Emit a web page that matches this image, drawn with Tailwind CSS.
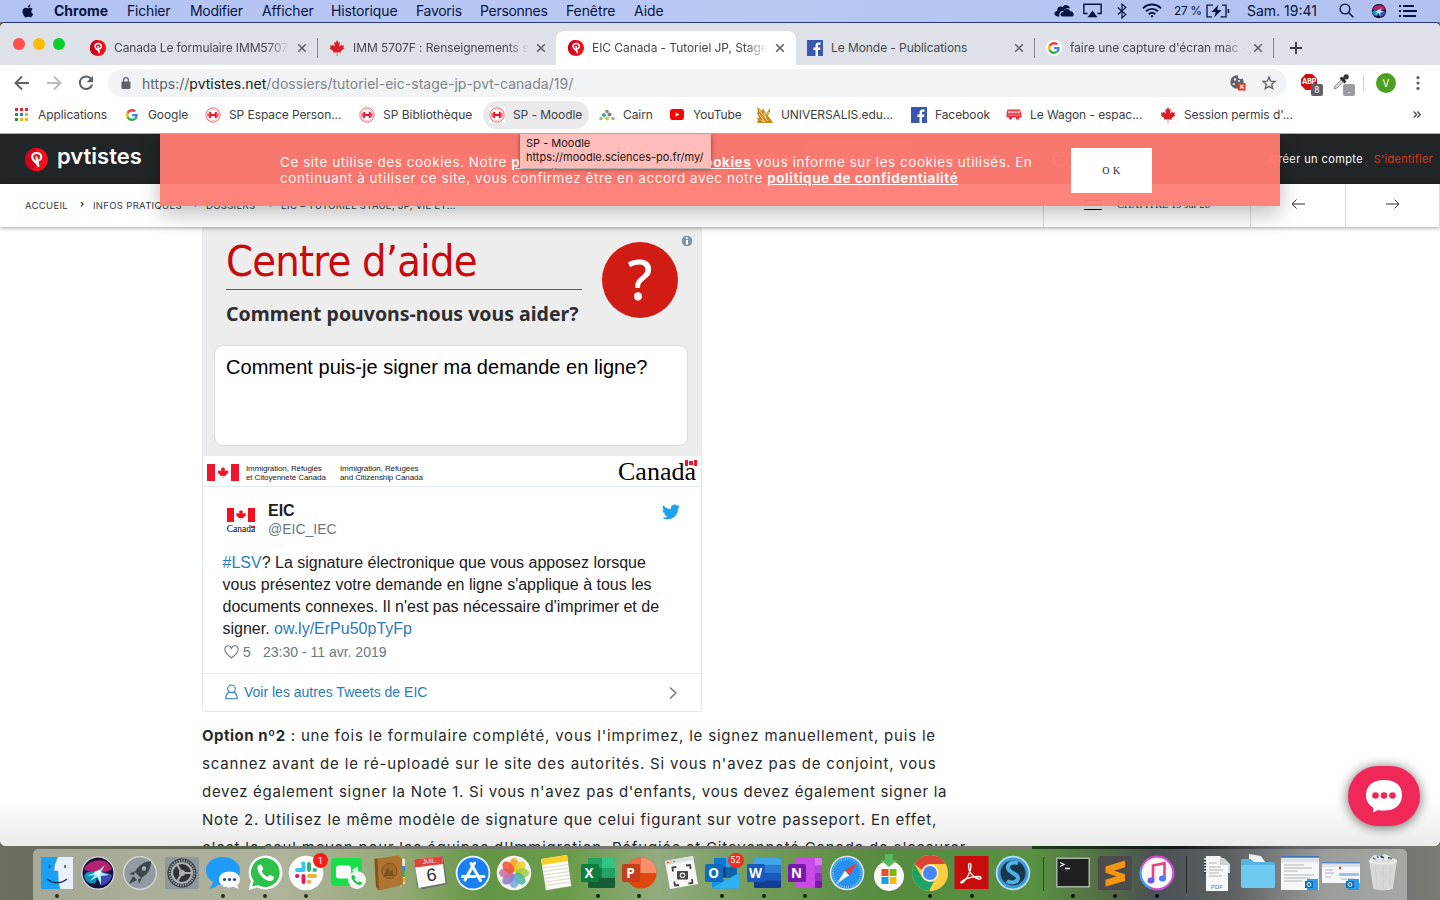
<!DOCTYPE html>
<html lang="fr">
<head>
<meta charset="utf-8">
<title>EIC Canada - Tutoriel JP, Stage</title>
<script src="https://cdn.jsdelivr.net/npm/@tailwindcss/browser@4"></script>
</head>
<body class="w-[1440px] h-[900px] overflow-hidden font-['Inter',sans-serif]">
<svg class="hidden">
  <symbol id="leaf" viewBox="-2015 -2000 4030 4030"><path d="M-90 2030l45-863a95 95 0 0 0-111-98l-859 151 116-320a65 65 0 0 0-20-73l-941-762 212-99a65 65 0 0 0 34-79l-186-572 542 115a65 65 0 0 0 73-38l105-247 423 454a65 65 0 0 0 111-57l-204-1052 327 189a65 65 0 0 0 91-27l332-652 332 652a65 65 0 0 0 91 27l327-189-204 1052a65 65 0 0 0 111 57l423-454 105 247a65 65 0 0 0 73 38l542-115-186 572a65 65 0 0 0 34 79l212 99-941 762a65 65 0 0 0-20 73l116 320-859-151a95 95 0 0 0-111 98l45 863z"/></symbol>
  <symbol id="pvt" viewBox="0 0 24 24"><circle cx="12" cy="12" r="12" fill="#f0101c"/><path d="M12 0a12 12 0 0 0-6 22.400L14 19 9 8z" fill="#d3001a"/><path d="M13.900 18.800C13.500 15 7.500 13.500 7.500 9.300 7.500 6.800 9.500 5.200 12.200 5.200s4.700 1.800 4.700 4.100c0 1.500-.7 2.700-1.900 3.400M13.900 18.800 12 9.800" fill="none" stroke="#fff" stroke-width="2.300" stroke-linecap="round" stroke-linejoin="round"/></symbol>
  <symbol id="goog" viewBox="0 0 48 48"><path fill="#EA4335" d="M24 9.500c3.540 0 6.710 1.220 9.210 3.600l6.850-6.850C35.900 2.380 30.470 0 24 0 14.620 0 6.510 5.380 2.560 13.220l7.980 6.190C12.430 13.720 17.740 9.500 24 9.500z"/><path fill="#4285F4" d="M46.980 24.550c0-1.570-.15-3.090-.38-4.550H24v9.020h12.940c-.58 2.960-2.260 5.480-4.780 7.180l7.730 6c4.510-4.180 7.090-10.360 7.090-17.650z"/><path fill="#FBBC05" d="M10.530 28.590c-.48-1.450-.76-2.990-.76-4.590s.27-3.140.76-4.590l-7.980-6.190C.92 16.460 0 20.120 0 24c0 3.880.92 7.540 2.560 10.780l7.970-6.190z"/><path fill="#34A853" d="M24 48c6.480 0 11.930-2.130 15.890-5.810l-7.730-6c-2.150 1.450-4.920 2.300-8.160 2.300-6.260 0-11.570-4.220-13.470-9.910l-7.980 6.190C6.510 42.620 14.620 48 24 48z"/></symbol>
  <symbol id="fb" viewBox="0 0 16 16"><path fill="#3b57ad" d="M0 0h16v16H0z"/><path fill="#fff" d="M11 16V9.900h2.100l.3-2.400H11V6c0-.7.200-1.200 1.200-1.200h1.300V2.600c-.2 0-1-.1-1.900-.1-1.900 0-3.100 1.100-3.100 3.200v1.800H6.400v2.400h2.100V16z"/></symbol>
  <symbol id="sp" viewBox="0 0 16 16"><circle cx="8" cy="8" r="7.200" fill="#fff" stroke="#f2596a" stroke-width=".9"/><circle cx="8" cy="8" r="5.600" fill="none" stroke="#f8a0aa" stroke-width=".6"/><path d="M5.200 5v6M10.800 5v6M5.200 8h5.600" stroke="#e8152c" stroke-width="2"/><path d="M3.200 6.200v3.600M12.800 6.200v3.600" stroke="#e8152c"/></symbol>
  <symbol id="x" viewBox="0 0 10 10"><path d="M1.200 1.200l7.600 7.600M8.800 1.200 1.200 8.800" stroke="#5a5e63" stroke-width="1.500"/></symbol>
  <symbol id="siri" viewBox="0 0 34 34"><circle cx="17" cy="17" r="16.500" fill="#e8e8ee"/><circle cx="17" cy="17" r="15.500" fill="#15123a"/><path d="M3 14C5 4 26-1 31 13c-4 3-8 3-14 4-6-1-9-2-14-3z" fill="#b3226f"/><path d="M17 17C9 14 4 16 3 20c2 8 9 9 12 6z" fill="#148fb8"/><path d="M17 17c7-1 12-1 14 3-3 7-8 10-12 9z" fill="#4146b4"/><path d="M5 20l11-4 8-7-4 7 8 3-8 1 0 9-4-8-7 4 5-6z" fill="#a8f0fa"/><path d="M13 16l5-2 2 3-3 3z" fill="#fff"/></symbol>
</svg>

<div class="relative flex flex-col w-[1440px] h-[900px] bg-[linear-gradient(90deg,#6d6e60_0px,#59614c_200px,#4c6a34_500px,#1c3a18_1040px,#14181c_1180px,#63666a_1300px,#7b7b74_1440px)]">

<!-- macOS menu bar -->
<header class="flex items-center h-[22px] pb-px shrink-0 bg-[linear-gradient(90deg,#b3c3f3,#bac8f4_50%,#b1c1f0)] text-[14px] text-[#06133f] whitespace-nowrap">
  <div class="w-[54px] pl-5"><svg class="w-[14px] h-4" viewBox="0 0 14 17" fill="#06133f"><path d="M11.600 9c0-1.700 1.400-2.500 1.500-2.600-.8-1.200-2.100-1.300-2.500-1.400-1.100-.1-2.100.6-2.600.6-.6 0-1.400-.6-2.300-.6C4.500 5 3.400 5.700 2.800 6.700c-1.200 2.100-.3 5.200.9 6.900.6.800 1.300 1.800 2.200 1.700.9 0 1.200-.6 2.300-.6s1.400.6 2.300.6 1.500-.8 2.100-1.700c.7-1 .9-1.900.9-2-.1 0-1.900-.7-1.900-2.600zM9.900 3.900c.5-.6.800-1.400.7-2.200-.7 0-1.500.5-2 1-.4.500-.8 1.300-.7 2.100.8.100 1.600-.4 2-.9z"/></svg></div>
  <div class="w-[73px] font-bold">Chrome</div>
  <div class="w-[63px] tracking-[-.2px]">Fichier</div>
  <div class="w-[72px] tracking-[-.3px]">Modifier</div>
  <div class="w-[69px] tracking-[-.1px]">Afficher</div>
  <div class="w-[85px] tracking-[-.15px]">Historique</div>
  <div class="w-[64px] tracking-[-.3px]">Favoris</div>
  <div class="w-[86px] tracking-[-.3px]">Personnes</div>
  <div class="w-[68px] tracking-[-.1px]">Fenêtre</div>
  <div class="w-[420px] tracking-[-.1px]">Aide</div>
  <svg class="w-[21px] h-[13px] shrink-0" viewBox="0 0 21 13" fill="#06133f"><path d="M3.500 12.500C-.5 12-.5 7.500 3 7c-.3-3.500 3-5.500 5.500-4C10-.2 15.500.2 16 4.600 13 3.500 10.500 4.500 9.500 7 6 6.500 4.500 9.500 5.700 12.500z"/><path d="M8.500 12.600c-3-.6-2.500-4.600.8-4.500C9.700 4.600 15 4 16.200 7.300c3-.6 5.200 4.600 1.800 5.300z"/></svg>
  <svg class="w-[19px] h-[15px] ml-2 shrink-0" viewBox="0 0 19 15" fill="none" stroke="#06133f" stroke-width="1.400"><path d="M4.500 10.500H.9V1.200h17.200v9.300h-3.600"/><path d="M9.500 7.500l5 6.800h-10z" fill="#06133f" stroke="none"/></svg>
  <svg class="w-[10px] h-[16px] ml-[15px] shrink-0" viewBox="0 0 10 16" fill="none" stroke="#06133f" stroke-width="1.200"><path d="M.8 4.500l8 7L5 15V1l3.800 3.500-8 7"/></svg>
  <svg class="w-[20px] h-[15px] ml-[15px] shrink-0" viewBox="0 0 20 15" fill="none" stroke="#06133f" stroke-width="1.900"><path d="M1 5.300c5-5 13-5 18 0M4 8.300c3.500-3.300 8.500-3.300 12 0M6.800 11.200c2-1.700 4.400-1.700 6.400 0"/><circle cx="10" cy="13.300" r=".8" fill="#06133f" stroke-width="1"/></svg>
  <div class="w-[32px] ml-3 text-[12px] tracking-[-.4px]">27 %</div>
  <svg class="w-[24px] h-[14px] shrink-0" viewBox="0 0 24 14" fill="none" stroke="#06133f" stroke-width="1.300"><path d="M7 1.200H1V12.800h5M16 1.200h4V12.800h-5.500"/><path d="M22.400 5v4" stroke-width="1.600"/><path d="M12.500.5 5.500 8h4.200l-1.500 5.500L15.500 6h-4.300z" fill="#06133f" stroke="none"/></svg>
  <div class="w-[92px] ml-[17px]">Sam. 19:41</div>
  <svg class="w-[15px] h-[15px] shrink-0" viewBox="0 0 15 15" fill="none" stroke="#06133f" stroke-width="1.400"><circle cx="6" cy="6" r="4.900"/><path d="M9.600 9.600l4.700 4.700"/></svg>
  <svg class="w-4 h-4 ml-[17px] shrink-0"><use href="#siri"/></svg>
  <svg class="w-[18px] h-[12px] ml-[12px] shrink-0" viewBox="0 0 18 12" stroke="#06133f" stroke-width="1.800"><path d="M0 1h2M0 6h2M0 11h2M4 1h11M4 6h14M4 11h13"/></svg>
</header>

<!-- browser window -->
<section class="relative flex flex-col mt-px h-[823px] shrink-0 rounded-t-[5px] rounded-b-[6px] overflow-hidden bg-white shadow-[0_-1px_0_#26377c] whitespace-nowrap">
  <!-- tab strip -->
  <div class="flex items-end h-[42px] shrink-0 bg-[#dee1e8] text-[12px] tracking-[-.07px] text-[#45494d]">
    <div class="flex items-center gap-2 w-[78px] h-[42px] pl-[13px]">
      <i class="w-3 h-3 rounded-full bg-[#fe4f4b]"></i><i class="w-3 h-3 rounded-full bg-[#fdbb06]"></i><i class="w-3 h-3 rounded-full bg-[#09ce29]"></i>
    </div>
    <div class="flex items-center w-[240px] -mr-px h-[34px] pl-3"><svg class="w-4 h-4 mr-2"><use href="#pvt"/></svg><div class="w-[175px] overflow-hidden mask-r-from-88% tracking-[-.14px]">Canada Le formulaire IMM5707</div><svg class="w-[10px] h-[10px] ml-2"><use href="#x"/></svg><i class="w-px h-5 ml-[10px] bg-[#85888d]"></i></div>
    <div class="flex items-center w-[239px] h-[34px] pl-3"><svg class="w-4 h-4 mr-2" fill="#d81e26"><use href="#leaf"/></svg><div class="w-[175px] overflow-hidden mask-r-from-88%">IMM 5707F : Renseignements s</div><svg class="w-[10px] h-[10px] ml-2"><use href="#x"/></svg></div>
    <div class="flex items-center w-[240px] h-[34px] pl-3 bg-white rounded-t-lg -mr-px"><svg class="w-4 h-4 mr-2"><use href="#pvt"/></svg><div class="w-[175px] overflow-hidden mask-r-from-88%">EIC Canada - Tutoriel JP, Stage</div><svg class="w-[10px] h-[10px] ml-2"><use href="#x"/></svg></div>
    <div class="flex items-center w-[240px] -mr-px h-[34px] pl-3"><svg class="w-4 h-4 mr-2"><use href="#fb"/></svg><div class="w-[175px]">Le Monde - Publications</div><svg class="w-[10px] h-[10px] ml-2"><use href="#x"/></svg><i class="w-px h-5 ml-[10px] bg-[#85888d]"></i></div>
    <div class="flex items-center w-[240px] h-[34px] pl-3"><div class="flex items-center justify-center w-4 h-4 mr-2 rounded-full bg-white"><svg class="w-3 h-3"><use href="#goog"/></svg></div><div class="w-[175px] overflow-hidden mask-r-from-88%">faire une capture d'écran mac -</div><svg class="w-[10px] h-[10px] ml-2"><use href="#x"/></svg><i class="w-px h-5 ml-[10px] bg-[#85888d]"></i></div>
    <svg class="w-3 h-3 ml-4 mb-[11px]" viewBox="0 0 12 12" stroke="#3c4043" stroke-width="1.900"><path d="M6 0v12M0 6h12"/></svg>
  </div>
  <!-- toolbar -->
  <div class="flex items-center h-[36px] shrink-0 pl-[14px]">
    <svg class="w-4 h-4" viewBox="0 0 16 16" fill="none" stroke="#5f6368" stroke-width="1.900"><path d="M15 8H2M8 1.500 1.500 8 8 14.500"/></svg>
    <svg class="w-4 h-4 ml-4" viewBox="0 0 16 16" fill="none" stroke="#b9bbbe" stroke-width="1.900"><path d="M1 8h13M8 1.500 14.500 8 8 14.500"/></svg>
    <svg class="w-4 h-4 ml-4" viewBox="0 0 16 16" fill="none" stroke="#5f6368" stroke-width="2"><path d="M13.400 4.200A6.300 6.300 0 1 0 14.200 9.500"/><path d="M15 .8v6.400H8.600z" fill="#5f6368" stroke="none"/></svg>
    <div class="flex items-center w-[1179px] h-7 ml-[14px] rounded-full bg-[#f1f3f4] pl-[13px] text-[14px]">
      <svg class="w-[10px] h-3 mr-[11px]" viewBox="0 0 10 12"><rect x=".5" y="4.500" width="9" height="7.500" rx="1" fill="#5f6368"/><path d="M2.700 5V3a2.300 2.300 0 0 1 4.600 0v2" fill="none" stroke="#5f6368" stroke-width="1.300"/></svg>
      <div class="w-[1088px] tracking-[.015px] text-[#80868b]"><span class="text-[#5f6368]">https://</span><span class="text-[#202124]">pvtistes.net</span>/dossiers/tutoriel-eic-stage-jp-pvt-canada/19/</div>
      <svg class="w-4 h-4" viewBox="0 0 16 16"><circle cx="7" cy="7" r="6.700" fill="#5f6368"/><circle cx="5" cy="4.500" r="1.200" fill="#f1f3f4"/><circle cx="3.800" cy="9" r="1.100" fill="#f1f3f4"/><circle cx="10.500" cy="1.500" r="2.500" fill="#f1f3f4"/><circle cx="9" cy="6" r="1" fill="#f1f3f4"/><path d="M8 8h7.500v7.500H8z" fill="#ea3323"/><path d="M10 10l3.500 3.500m0-3.500L10 13.500" stroke="#fff" stroke-width="1.300"/></svg>
      <svg class="w-[14px] h-[14px] ml-4" viewBox="0 0 14 14" fill="none" stroke="#5f6368" stroke-width="1.400"><path d="M7 1.200l1.700 4 4.300.3-3.300 2.800 1 4.300L7 10.300l-3.700 2.300 1-4.300L1 5.500l4.300-.3z"/></svg>
    </div>
    <div class="relative w-[24px] h-6 ml-[14px]"><svg class="w-4 h-4 mt-[3px]" viewBox="0 0 16 16"><path d="M4.700 0h6.600L16 4.700v6.600L11.300 16H4.700L0 11.300V4.700z" fill="#d40f0f"/></svg><b class="absolute left-[1px] top-[6px] text-[7px] leading-[10px] text-white">ABP</b><span class="absolute left-[10px] top-[13px] w-3 h-3 rounded-[2px] bg-[#5f6062] text-center text-[8.500px] leading-3 text-white">8</span></div>
    <div class="relative w-[24px] h-6 ml-[8px]"><svg class="w-4 h-4 mt-[3px]" viewBox="0 0 16 16"><path d="M1 15l1-3 7-7 2 2-7 7z" fill="#d5d8dc" stroke="#777" stroke-width=".8"/><path d="M7.500 3.500l5 5M10 5.500l3-3" stroke="#2b2b2b" stroke-width="2.800"/><circle cx="13.200" cy="2.800" r="2.600" fill="#333"/></svg><span class="absolute left-[10px] top-[13px] w-3 h-3 rounded-[2px] bg-[#9a9b9d] text-center text-[8.500px] leading-3 text-white">.</span></div>
    <i class="w-px h-4 ml-[6px] bg-[#cfd1d4]"></i>
    <div class="flex items-center justify-center w-5 h-5 ml-3 rounded-full bg-[#4ea022] text-white text-[10px]">V</div>
    <svg class="w-1 h-[14px] ml-5" viewBox="0 0 4 14" fill="#5f6368"><circle cx="2" cy="1.700" r="1.600"/><circle cx="2" cy="7" r="1.600"/><circle cx="2" cy="12.300" r="1.600"/></svg>
  </div>
  <!-- bookmarks -->
  <div class="flex items-center h-[33px] shrink-0 pl-[15px] pb-[5px] text-[12px] tracking-[-.08px] text-[#3c4043] border-b border-[#a9a9a9]">
    <svg class="w-[13px] h-[13px] mr-[10px]" viewBox="0 0 13 13"><path d="M0 0h3v3H0zM5 0h3v3H5zM10 0h3v3h-3z" fill="#e8252b"/><path d="M0 5h3v3H0zM0 10h3v3H0z" fill="#1a9b4b"/><path d="M5 5h3v3H5z" fill="#2a7de9"/><path d="M10 5h3v3h-3zM5 10h3v3H5zM10 10h3v3h-3z" fill="#f2ae1c"/></svg>
    <div class="w-[88px]">Applications</div>
    <svg class="w-3 h-3 mr-[10px]"><use href="#goog"/></svg><div class="w-[57px]">Google</div>
    <svg class="w-4 h-4 mr-2"><use href="#sp"/></svg><div class="w-[130px]">SP Espace Person...</div>
    <svg class="w-4 h-4 mr-2"><use href="#sp"/></svg><div class="w-[100px] tracking-normal">SP Bibliothèque</div>
    <div class="flex items-center w-[106px] h-7 pl-[6px] rounded-full bg-[#eaeaec]"><svg class="w-4 h-4 mr-2 bg-white"><use href="#sp"/></svg>SP - Moodle</div>
    <svg class="w-4 h-4 ml-[10px] mr-2" viewBox="0 0 16 16"><circle cx="8" cy="4.500" r="1.800" fill="#9a8569"/><circle cx="5" cy="8" r="2" fill="#36a9a5"/><circle cx="10.500" cy="7.500" r="2" fill="#7d7f86"/><circle cx="2" cy="11.500" r="1.800" fill="#8fc07b"/><circle cx="8" cy="11.500" r="2" fill="#c7cf2c"/><circle cx="14" cy="11.500" r="1.800" fill="#a5a7ab"/></svg><div class="w-[47px]">Cairn</div>
    <svg class="w-[14px] h-[11px] mr-[9px]" viewBox="0 0 15 11" preserveAspectRatio="none"><rect width="15" height="11" rx="2.500" fill="#f00"/><path d="M6 3.200v4.600l4-2.300z" fill="#fff"/></svg><div class="w-[64px]">YouTube</div>
    <svg class="w-4 h-4 mr-2" viewBox="0 0 16 16"><path d="M0 0l5 4 1-3 3 6 4-6 0 4-2 4 4 5 1 2H0l1-3-1-2 2 0-2-5 1-2z" fill="#c98a1c"/><path d="M2 3l9 11M2 7l6 8M7 6l2 5M12 5l-2 3M4 13l3 2" stroke="#fff3d6" stroke-width=".7"/></svg><div class="w-[130px]">UNIVERSALIS.edu...</div>
    <svg class="w-4 h-4 mr-2"><use href="#fb"/></svg><div class="w-[71px]">Facebook</div>
    <svg class="w-4 h-[11px] mr-2" viewBox="0 0 16 11"><path d="M1.500.5h12.500l1.500 5v3H.5v-4z" fill="#e9303c"/><path d="M2.500 2.300h11v1.700h-11zM1.500 6.200h13" fill="#fbd3d5" stroke="#fbc9cc" stroke-width=".6"/><circle cx="4.500" cy="9" r="1.700" fill="#e9303c"/><circle cx="11.500" cy="9" r="1.700" fill="#e9303c"/><path d="M5 1v4M8 1v4M11 1v4" stroke="#e9303c" stroke-width=".8"/></svg><div class="w-[130px]">Le Wagon - espac...</div>
    <svg class="w-4 h-4 mr-2" fill="#d81e26"><use href="#leaf"/></svg><div class="w-[229px]">Session permis d'...</div>
    <svg class="w-[8px] h-[7px]" viewBox="0 0 8 7" fill="none" stroke="#4b4f53" stroke-width="1.300"><path d="M.7.500l3 3-3 3M4.300.500l3 3-3 3"/></svg>
  </div>

  <!-- web page -->
  <div class="relative flex flex-col grow min-h-0 overflow-hidden bg-white">
    <div class="flex items-center h-[50px] shrink-0 bg-[#212528] pl-[25px] pr-[7px] text-[11px] text-white">
      <div class="flex items-center w-[347px]"><svg class="w-[23px] h-[23px] mr-[9px]"><use href="#pvt"/></svg><span class="text-[22px] leading-6 font-semibold -mt-[7px]">pvtistes</span></div>
      <nav class="flex items-center w-[898px] tracking-[.3px]">
        <div class="w-[53px]">LE PVT</div><div class="w-[328px]">DESTINATIONS</div><div class="w-[52px]">FORUM</div><div class="w-[107px] h-9 leading-9 text-center bg-white/10">ASSURANCE PVT</div><div class="w-[108px] text-center">BONS PLANS</div>
        <svg class="w-4 h-4" viewBox="0 0 16 16" fill="none" stroke="#fff"><circle cx="6.500" cy="6.500" r="5.500"/><path d="M10.500 10.500 15 15"/></svg>
        <svg class="w-4 h-4 ml-4" viewBox="0 0 16 16" fill="none" stroke="#fff"><circle cx="8" cy="8" r="7"/><path d="M6 6c0-3 4-3 4-.5C10 7.500 8 7 8 9.500M8 11v1.500"/></svg>
      </nav>
      <div class="w-[104px] shrink-0 tracking-[.4px]">Créer un compte</div><span class="shrink-0 text-[#d3391d] tracking-[.25px]">S'identifier</span>
    </div>
    <div class="relative flex h-[43px] shrink-0 bg-white shadow-[0_1px_4px_rgba(0,0,0,.35)] text-[9.500px] text-[#33373b]">
      <div class="flex items-center w-[1043px] pl-[25px] pt-px tracking-[.32px]">
        <div class="w-[55px]">ACCUEIL</div><div class="w-[13px] -mt-[3px] font-bold">›</div>
        <div class="w-[101px]">INFOS PRATIQUES</div><div class="w-[12px] -mt-[3px] font-bold">›</div>
        <div class="w-[63px]">DOSSIERS</div><div class="w-[12px] -mt-[3px] font-bold">›</div>
        EIC – TUTORIEL STAGE, JP, VIE ET...
      </div>
      <div class="flex items-center w-[207px] border-l border-[#dcdcdc] pl-10 pb-px font-['Liberation_Serif',serif] text-[10.500px]"><svg class="w-[18px] h-[10px] mr-[15px]" viewBox="0 0 18 10" stroke="#000"><path d="M0 .5h18M0 5h18M0 9.500h18"/></svg>CHAPITRE 19 sur 28</div>
      <div class="flex items-center justify-center w-[95px] border-l border-[#dcdcdc] pb-[3px]"><svg class="w-[14px] h-[10px]" viewBox="0 0 14 10" fill="none" stroke="#333"><path d="M14 5H1M5.500.500 1 5l4.500 4.500"/></svg></div>
      <div class="flex items-center justify-center w-[95px] border-x border-[#dcdcdc] pb-[3px]"><svg class="w-[14px] h-[10px]" viewBox="0 0 14 10" fill="none" stroke="#333"><path d="M0 5h13M8.500.500 13 5 8.500 9.500"/></svg></div>
    </div>

    <div class="flex flex-col pl-[202px]">
      <article class="flex flex-col w-[500px] h-[485px] border border-t-0 border-[#e1e8ed] rounded-b-[4px] font-['Liberation_Sans',sans-serif]">
        <div class="flex flex-col h-[229px] bg-[#ededee] px-3">
          <div class="flex justify-between h-[118px]">
            <div class="flex flex-col pl-[11px]">
              <div class="h-[62px] w-[356px] pt-[9px] font-['DejaVu_Sans_Condensed','DejaVu_Sans',sans-serif] text-[43px] leading-[50px] tracking-[-.8px] text-[#c80a0e]">Centre d’aide</div>
              <div class="w-[356px] h-px bg-[#d0322d]"></div>
              <div class="pt-[12px] font-['Noto_Sans',sans-serif] font-bold text-[19.500px] leading-6 text-[#2e2e30]">Comment pouvons-nous vous aider?</div>
            </div>
            <div class="flex items-start mr-[-4px]">
              <div class="flex items-center justify-center w-[76px] h-[76px] mt-[15px] pb-1 rounded-full bg-[#d01c14] font-['Noto_Sans',sans-serif] font-medium text-[56px] leading-[60px] text-white">?</div>
              <svg class="w-3 h-3 ml-[3px] mt-2" viewBox="0 0 12 12"><circle cx="6" cy="6" r="5.700" fill="#7e93a3" stroke="#fff" stroke-width=".6"/><path d="M6 2.200v1.800M6 5v4.500" stroke="#fff" stroke-width="2"/></svg>
            </div>
          </div>
          <div class="w-[474px] h-[101px] ml-[-1px] rounded-[9px] border border-[#dcdcde] bg-white pl-[11px] pt-[9px] text-[20px] leading-6 tracking-[.03px] text-black">Comment puis-je signer ma demande en ligne?</div>
        </div>
        <div class="flex items-center h-[31px] shrink-0 px-1 border-b border-[#e1e8ed] text-[8px] leading-[9px] tracking-[-.1px] text-[#222]">
          <svg class="w-[32px] h-[17px] mt-[2px] mr-[7px]" viewBox="0 0 32 17" fill="#f0142c"><path d="M0 0h8v17H0zM24 0h8v17h-8z"/><use href="#leaf" x="10" y="2" width="12" height="13"/></svg>
          <div class="w-[94px] pt-[4px]">Immigration, Réfugiés<br>et Citoyenneté Canada</div>
          <div class="w-[278px] pt-[4px]">Immigration, Refugees<br>and Citizenship Canada</div>
          <div class="relative pt-[2px] font-['Liberation_Serif',serif] text-[26px] leading-7 tracking-normal text-black">Canada<svg class="absolute right-[-1px] top-[4px] w-3 h-[6px]" viewBox="0 0 12 6" fill="#f0142c"><path d="M0 0h3v6H0zM9 0h3v6H9zM4 1h4v4H4z"/></svg></div>
        </div>
        <div class="flex h-[52px] shrink-0 pl-[20px] pr-[21px] pt-[14px]">
          <div class="relative flex flex-col items-center w-[36px] mr-[9px] pt-[7px] font-['Liberation_Serif',serif] text-[9.500px] leading-[11px] text-black"><svg class="w-[28px] h-[14px] mb-[2px]" viewBox="0 0 28 14" fill="#f50f1c"><path d="M0 0h7v14H0zM21 0h7v14h-7z"/><use href="#leaf" x="8.500" y="1.500" width="11" height="11"/></svg>Canada<i class="absolute right-[4px] top-[25px] w-1 h-[2px] bg-[#f50f1c]"></i></div>
          <div class="flex flex-col grow"><b class="text-[16px] leading-[19px] text-[#1c2022]">EIC</b><span class="text-[14px] leading-[18px] text-[#697882]">@EIC_IEC</span></div>
          <svg class="w-[18px] h-[16px] mt-[3px]" viewBox="0 2 24 20" fill="#1da1f2"><path d="M23.950 4.570a10 10 0 0 1-2.820.77 4.960 4.960 0 0 0 2.160-2.720c-.95.550-2 .950-3.130 1.180a4.920 4.920 0 0 0-8.380 4.480C7.690 8.090 4.070 6.130 1.640 3.160a4.820 4.820 0 0 0-.67 2.480c0 1.710.87 3.210 2.190 4.100a4.900 4.900 0 0 1-2.230-.62v.060a4.920 4.920 0 0 0 3.950 4.830 5 5 0 0 1-2.210.080 4.940 4.940 0 0 0 4.600 3.420A9.870 9.870 0 0 1 0 19.540a13.990 13.990 0 0 0 7.550 2.210c9.050 0 14-7.500 14-13.980 0-.21 0-.42-.020-.63a9.940 9.940 0 0 0 2.460-2.550z"/></svg>
        </div>
        <div class="pl-[19.500px] pt-[13px] text-[16px] leading-[22px] text-[#1c2022]">
          <span class="text-[#2b7bb9]">#LSV</span>? La signature électronique que vous apposez lorsque<br>
          vous présentez votre demande en ligne s'applique à tous les<br>
          documents connexes. Il n'est pas nécessaire d'imprimer et de<br>
          signer. <span class="text-[#2b7bb9]">ow.ly/ErPu50pTyFp</span>
        </div>
        <div class="flex items-center h-[34px] shrink-0 pl-[21px] pb-[9px] text-[14px] text-[#697882] border-b border-[#e1e8ed]"><svg class="w-[15px] h-[14px] mr-1" viewBox="0 0 15 14" fill="none" stroke="#697882" stroke-width="1.100"><path d="M7.500 13C3 9.500.8 7 .8 4.500.8 2.300 2.400.8 4.300.8c1.500 0 2.700 1 3.200 2.400C8 1.800 9.200.8 10.700.8c1.900 0 3.500 1.500 3.500 3.700 0 2.500-2.200 5-6.700 8.500z"/></svg><div class="w-[20px]">5</div>23:30 - 11 avr. 2019</div>
        <div class="flex items-center justify-between h-[37px] pl-[22px] pr-[24px] text-[14px] text-[#2b7bb9]"><div class="flex items-center"><svg class="w-[13px] h-4 mr-[6px] -mt-[2px]" viewBox="0 0 13 16" fill="none" stroke="#2b7bb9" stroke-width="1.100"><circle cx="6.500" cy="4.800" r="3.800"/><path d="M4 8.300C1.500 9.500.8 12 .8 14.800h11.400c0-2.800-.7-5.300-3.200-6.500"/></svg>Voir les autres Tweets de EIC</div><svg class="w-2 h-3" viewBox="0 0 8 12" fill="none" stroke="#697882" stroke-width="1.400"><path d="M1 .600 7 6l-6 5.400"/></svg></div>
      </article>
      <div class="pt-[10px] text-[15px] leading-7 tracking-[.81px] text-[#262a2d]">
        <b class="tracking-[.5px]">Option nº2</b> : une fois le formulaire complété, vous l'imprimez, le signez manuellement, puis le<br>
        scannez avant de le ré-uploadé sur le site des autorités. Si vous n'avez pas de conjoint, vous<br>
        <span class="tracking-[.72px]">devez également signer la Note 1. Si vous n'avez pas d'enfants, vous devez également signer la</span><br>
        Note 2. Utilisez le même modèle de signature que celui figurant sur votre passeport. En effet,<br>
        c'est le seul moyen pour les équipes d'Immigration, Réfugiés et Citoyenneté Canada de s'assurer
      </div>
    </div>
    <div class="absolute inset-x-0 bottom-0 h-12 bg-linear-to-b from-black/0 to-black/8"></div>

    <!-- cookie banner -->
    <div class="absolute left-[160px] top-0 flex w-[1120px] h-[72px] pl-[120px] bg-[linear-gradient(rgba(255,122,113,.965)_50px,rgba(255,124,114,.935)_50px)] shadow-[0_8px_20px_rgba(0,0,0,.25)] text-[13.500px] leading-4 tracking-[.54px] text-white/95">
      <div class="w-[791px] pt-5">Ce site utilise des cookies. Notre <b class="underline">politique d'utilisation des cookies</b> vous informe sur les cookies utilisés. En<br>continuant à utiliser ce site, vous confirmez être en accord avec notre <b class="underline">politique de confidentialité</b></div>
      <div class="flex items-center justify-center w-[81px] h-[45px] mt-[14px] bg-white font-['Liberation_Serif',serif] text-[10px] text-[#222]">O K</div>
    </div>
    <!-- bookmark tooltip -->
    <div class="absolute left-[520px] top-0 w-[191px] h-[34px] pl-[6px] pt-[2px] bg-[#ffbdb9] shadow-[0_1px_4px_rgba(0,0,0,.5)] text-[11px] leading-[14px] text-[#1d1514]">SP - Moodle<br>https://moodle.sciences-po.fr/my/</div>
    <!-- chat launcher -->
    <div class="absolute left-[1348px] top-[632px] flex items-center justify-center w-[72px] h-[60px] rounded-[30px] bg-[#f0285a] shadow-[0_1px_12px_rgba(0,0,0,.6)]"><svg class="w-[38px] h-[34px]" viewBox="0 0 38 34"><path d="M19 1C9 1 1 6 1 16c0 6 3 10 7.500 13L8 33.500l5-2.500c2 .4 4 .6 6 .6 10 0 18-5 18-15.600S29 1 19 1z" fill="#fff"/><g fill="#f0285a"><circle cx="10.500" cy="16.500" r="3.300"/><circle cx="19" cy="16.500" r="3.300"/><circle cx="27.500" cy="16.500" r="3.300"/></g></svg></div>
  </div>
</section>
<div class="w-[767px] h-[3px] ml-[265px] shrink-0 bg-[#76786f]"></div>

<!-- dock -->
<footer class="relative flex items-start w-[1374px] h-[51px] ml-[33px] pl-[3px] rounded-t-[5px] bg-[linear-gradient(90deg,#a6a998_0px,#b0b39b_250px,#93a874_370px,#629644_450px,#6b9c4c_540px,#93ab7f_625px,#6f9a55_740px,#568b40_850px,#599142_1000px,#536c44_1075px,#4a5154_1120px,#5d6163_1200px,#999c98_1290px,#a5a9a2_1374px)]">
  <div class="w-[41.600px] flex flex-col items-center pt-1"><svg class="w-10 h-10" viewBox="0 0 40 40"><path d="M4 4h32v32H4z" fill="#e9f0fa"/><path d="M4 4h17c-3 5-4 10-4 14h4c0 6 0 12 2 18H4z" fill="#1ba0f3"/><path d="M21 4c-3 5-4 10-4 14h4c0 6 0 12 2 18" fill="none" stroke="#6d9cc4" stroke-width=".7"/><path d="M10 26c6 5 14 5 20 0M12.500 12v3M28 12v3" fill="none" stroke="#14375a" stroke-width="1.300"/></svg><i class="w-1 h-1 mt-px rounded-full bg-[#25301c]"></i></div>
  <div class="w-[41.600px] flex flex-col items-center pt-[7px]"><svg class="w-[34px] h-[34px]"><use href="#siri"/></svg></div>
  <div class="w-[41.600px] flex flex-col items-center pt-1"><svg class="w-10 h-10" viewBox="0 0 40 40"><circle cx="20" cy="20" r="17" fill="#d5dade"/><circle cx="20" cy="20" r="15.700" fill="#929ba1"/><path d="M31 8c-8 1-13 5-16 11l6 6c6-3 10-8 10-17zM15 18l-6 3 5 1zM22 25l-3 6-1-5zM13 23l-4 8 8-4z" fill="#3f464b"/><circle cx="24" cy="15.500" r="2.200" fill="#a9b1b6"/></svg></div>
  <div class="w-[41.600px] flex flex-col items-center pt-1"><svg class="w-10 h-10" viewBox="0 0 40 40"><rect x="3" y="4" width="34" height="32" rx="2" fill="#8f979e"/><circle cx="20" cy="20" r="14.500" fill="#2f3337"/><circle cx="20" cy="20" r="12.500" fill="none" stroke="#9aa0a5" stroke-width="2" stroke-dasharray="1.500 1"/><circle cx="20" cy="20" r="10" fill="none" stroke="#aab0b4" stroke-width="2.200"/><path d="M20 20H29.500M20 20l-5-8.500M20 20l-5 8.500" stroke="#aab0b4" stroke-width="2.200"/><circle cx="20" cy="20" r="3" fill="#aab0b4"/></svg></div>
  <div class="w-[41.600px] flex flex-col items-center pt-1"><svg class="w-10 h-10" viewBox="0 0 40 40"><path d="M20 4C10 4 3 9.500 3 17.500c0 5 3 9 7 11.500-.5 3-2 5-4 6.500 4 0 7-1.500 9-4 13 2 22-4 22-14C37 9.500 29 4 20 4z" fill="#1f9cfb"/><path d="M26.500 18.500c-6 0-10.500 3.500-10.500 8s4.500 8 10.500 8c1.500 0 3-.2 4.300-.7 1.500 1.200 3.500 1.700 5.200 1.700-1-1-1.600-2.500-1.600-3.500 1.700-1.500 2.600-3.300 2.600-5.500 0-4.500-4.500-8-10.500-8z" fill="#fff"/><g fill="#1a4b9b"><circle cx="21.500" cy="26.500" r="1.600"/><circle cx="26.500" cy="26.500" r="1.600"/><circle cx="31.500" cy="26.500" r="1.600"/></g></svg><i class="w-1 h-1 mt-px rounded-full bg-[#25301c]"></i></div>
  <div class="w-[41.600px] flex flex-col items-center pt-1"><svg class="w-10 h-10" viewBox="0 0 40 40"><path d="M20.500 2.500A17 17 0 0 0 6 28L3.500 37l9-2.500A17 17 0 1 0 20.500 2.500z" fill="#fff"/><path d="M20.500 5A14.500 14.500 0 0 0 8.700 28l-1.500 5.500 5.600-1.500A14.500 14.500 0 1 0 20.500 5z" fill="#2bc14a"/><path d="M15.200 11.500c-1.500 0-3 2-2.700 4.200.6 5 6.500 11.500 12 12.300 2.500.3 4.700-1.200 4.500-3.500-.1-1-3.500-2.500-4.300-2.500-.8.200-1.500 2-2.300 1.800-2-.7-5-3.500-5.500-5.500 0-.8 1.500-1.500 1.400-2.500-.3-1-1.500-4.300-3.100-4.300z" fill="#fff"/></svg><i class="w-1 h-1 mt-px rounded-full bg-[#25301c]"></i></div>
  <div class="relative w-[41.600px] flex flex-col items-center pt-1"><svg class="w-10 h-10" viewBox="0 0 40 40"><circle cx="20" cy="20" r="17.300" fill="#fff"/><g stroke-width="4" stroke-linecap="round" fill="none"><path d="M17.500 12.500v4.500M17 10.500h.5M11 17h6.500" stroke="#36c5f0"/><path d="M23 11V17M29 17h-.5" stroke="#2eb67d"/><path d="M23 23h6M23 29v-.5" stroke="#ecb22e"/><path d="M17.500 23v6M11 23h.5" stroke="#e01e5a"/></g></svg><i class="w-1 h-1 mt-px rounded-full bg-[#25301c]"></i><span class="absolute left-[27px] top-[4px] w-[15px] h-[15px] rounded-full bg-[#f81e16] text-center text-[9px] leading-[15px] text-white">1</span></div>
  <div class="w-[41.600px] flex flex-col items-center pt-1"><svg class="w-10 h-10" viewBox="0 0 40 40"><rect x="3" y="5" width="31" height="28" rx="4" fill="#16df48"/><rect x="8" y="12.500" width="15" height="13" rx="3" fill="#fff"/><path d="M24 17l6-4v12z" fill="#d9f8df"/><circle cx="29" cy="27" r="9" fill="#f3f6f3"/><path d="M25 22c-1 0-1.500 1-1.500 2 .5 4 4.500 7.500 8 8 1.500 0 2.500-1 2.500-2 0-.8-2.500-1.800-3-1.500l-1 1c-1.500-.5-3.300-2.500-3.500-3.700l1-1c0-.9-1.500-2.800-2.500-2.800z" fill="#18c846"/></svg></div>
  <div class="w-[41.600px] flex flex-col items-center pt-1"><svg class="w-10 h-10" viewBox="0 0 40 40"><path d="M30 5l5 1v24l-5 4z" fill="#e8e6e0"/><path d="M32 13h3v6h-3z" fill="#2e8bd8"/><path d="M32 19h3v5h-3z" fill="#4bb34b"/><path d="M32 25h3v4h-3z" fill="#f2a322"/><path d="M4.500 6 28 2.500l4 3L33 32 9 37.500 6 34z" fill="#ad7531"/><path d="M4.500 6l3-.5 1.500 32-3-3.500z" fill="#84541d"/><circle cx="19.500" cy="18" r="7.500" fill="#a36c2c" stroke="#80511d"/><path d="M14 23c0-3 2-2.500 2-5.500s3.500-3 3.500 0 3.500-3 3.500 0-.3 2.500 2 5.500z" fill="#80511d"/></svg></div>
  <div class="relative w-[41.600px] flex flex-col items-center pt-1"><svg class="w-10 h-10" viewBox="0 0 40 40"><path d="M4 8l28-5 4 28-24 5-6-2z" fill="#67696c"/><path d="M3 6.500 31 3l3.500 27L7.500 35z" fill="#f9f9f8"/><path d="M3 6.500 31 3l1 8L4 14.500z" fill="#e1443c"/></svg><div class="absolute top-[9px] flex flex-col items-center rotate-[-7deg] font-['Liberation_Sans',sans-serif]"><span class="text-[6px] leading-[7px] text-white">JUIL.</span><span class="text-[18px] leading-[20px] text-[#333]">6</span></div></div>
  <div class="w-[41.600px] flex flex-col items-center pt-1"><svg class="w-10 h-10" viewBox="0 0 40 40"><circle cx="20" cy="20" r="17.300" fill="#eef4fb"/><circle cx="20" cy="20" r="15.500" fill="#1a7ff0"/><path d="M21.500 10 12 27M18 10.500 27.500 27.500M9.500 23.500H22M26 23.500h5" stroke="#fff" stroke-width="3" stroke-linecap="round"/></svg></div>
  <div class="w-[41.600px] flex flex-col items-center pt-1"><svg class="w-10 h-10" viewBox="0 0 40 40"><circle cx="20" cy="20" r="17.300" fill="#f3f3f1"/><g fill-opacity=".85"><ellipse cx="20" cy="12" rx="4.800" ry="7" fill="#f8a11e"/><ellipse cx="20" cy="12" rx="4.800" ry="7" fill="#e9cf26" transform="rotate(45 20 20)"/><ellipse cx="20" cy="12" rx="4.800" ry="7" fill="#9ecb3f" transform="rotate(90 20 20)"/><ellipse cx="20" cy="12" rx="4.800" ry="7" fill="#4bb795" transform="rotate(135 20 20)"/><ellipse cx="20" cy="12" rx="4.800" ry="7" fill="#6ba8e0" transform="rotate(180 20 20)"/><ellipse cx="20" cy="12" rx="4.800" ry="7" fill="#8d79c7" transform="rotate(225 20 20)"/><ellipse cx="20" cy="12" rx="4.800" ry="7" fill="#cf6f9d" transform="rotate(270 20 20)"/><ellipse cx="20" cy="12" rx="4.800" ry="7" fill="#f0533c" transform="rotate(315 20 20)"/></g></svg></div>
  <div class="w-[41.600px] flex flex-col items-center pt-1"><svg class="w-10 h-10" viewBox="0 0 40 40"><path d="M5 7l26-5 5 31-26 5z" fill="#a3a099"/><path d="M5 6l26-4 4 31-25 4z" fill="#fdfcf5"/><path d="M5 6l26-4 .8 6L6 12z" fill="#fbcf24"/><path d="M7 15l25-3.500M7.500 18.500l25-3.500M8 22l25-3.500M8.500 25.500l25-3.500M9 29l25-3.500M9.500 32.500l25-3.500" stroke="#c9c8c3" stroke-width=".7"/></svg></div>
  <div class="w-[41.600px] flex flex-col items-center pt-1"><svg class="w-10 h-10" viewBox="0 0 40 40"><rect x="10" y="5" width="27" height="30" rx="1.500" fill="#185c37"/><path d="M10 6.500A1.500 1.500 0 0 1 11.500 5H24v10H10z" fill="#21a366"/><path d="M24 5h11.500A1.500 1.500 0 0 1 37 6.500V15H24z" fill="#33c481"/><path d="M24 15h13v10H24z" fill="#21a366"/><path d="M10 15h14v10H10z" fill="#107c41"/><rect x="3" y="11" width="18" height="18" rx="1.500" fill="#107c41"/><text x="11" y="25" text-anchor="middle" font-family="Open Sans" font-weight="700" font-size="13.500" fill="#fff">X</text></svg><i class="w-1 h-1 mt-px rounded-full bg-[#14200e]"></i></div>
  <div class="w-[41.600px] flex flex-col items-center pt-1"><svg class="w-10 h-10" viewBox="0 0 40 40"><circle cx="22" cy="20" r="15.500" fill="#e0470f"/><path d="M22 4.500A15.500 15.500 0 0 1 37.500 20H22z" fill="#ff8f6b"/><path d="M22 4.500A15.500 15.500 0 0 0 6.500 20H22z" fill="#ed6c47"/><rect x="3" y="11" width="18" height="18" rx="1.500" fill="#c43e1c"/><text x="11.500" y="25" text-anchor="middle" font-family="Open Sans" font-weight="700" font-size="13.500" fill="#fff">P</text></svg><i class="w-1 h-1 mt-px rounded-full bg-[#14200e]"></i></div>
  <div class="w-[41.600px] flex flex-col items-center pt-1"><svg class="w-10 h-10" viewBox="0 0 40 40"><path d="M4 8l28-5 5 28-28 5z" fill="#f6f6f6"/><path d="M4 8l28-5 .7 4L4.700 12z" fill="#dedede"/><circle cx="7" cy="9.500" r="1" fill="#f44"/><circle cx="10" cy="9" r="1" fill="#fb3"/><circle cx="13" cy="8.500" r="1" fill="#3c4"/><path d="M12 18.500l-.6-4 4-.7M25 12.500l4-.5.700 4M31 26l.500 4-4 .500M18 32l-4 .500-.700-4" fill="none" stroke="#444" stroke-width="1.800"/><rect x="16" y="18" width="11" height="8.500" rx="1" fill="#444"/><circle cx="21.500" cy="22.300" r="2.800" fill="#f6f6f6"/><circle cx="21.500" cy="22.300" r="1.600" fill="#444"/></svg></div>
  <div class="relative w-[41.600px] flex flex-col items-center pt-1"><svg class="w-10 h-10" viewBox="0 0 40 40"><rect x="12" y="5" width="23" height="20" fill="#0a64ad"/><path d="M12 5h12v9H12z" fill="#0f78d4"/><path d="M24 5h11v9H24z" fill="#28a8ea"/><path d="M12 14h12v10H12z" fill="#14447d"/><path d="M10 20l14 8 13-8v14a1.500 1.500 0 0 1-1.500 1.500h-24A1.500 1.500 0 0 1 10 34z" fill="#1a8fe0"/><path d="M10 35l27-15v14a1.500 1.500 0 0 1-1.500 1.500H11z" fill="#2fb2f1"/><rect x="3" y="11" width="18" height="18" rx="1.500" fill="#0f6cbd"/><text x="11.500" y="25" text-anchor="middle" font-family="Open Sans" font-weight="700" font-size="13.500" fill="#fff">O</text></svg><i class="w-1 h-1 mt-px rounded-full bg-[#14200e]"></i><span class="absolute left-[26px] top-[4px] w-[16px] h-[15px] rounded-full bg-[#f2301f] text-center text-[8.500px] leading-[15px] text-white">52</span></div>
  <div class="w-[41.600px] flex flex-col items-center pt-1"><svg class="w-10 h-10" viewBox="0 0 40 40"><rect x="10" y="5" width="27" height="30" rx="1.500" fill="#103f91"/><path d="M10 12.500v-6A1.500 1.500 0 0 1 11.500 5h24A1.500 1.500 0 0 1 37 6.500v6z" fill="#41a5ee"/><path d="M10 12.500h27V20H10z" fill="#2b7cd3"/><path d="M10 20h27v7.500H10z" fill="#185abd"/><rect x="3" y="11" width="18" height="18" rx="1.500" fill="#185abd"/><text x="11.500" y="25" text-anchor="middle" font-family="Open Sans" font-weight="700" font-size="13.500" fill="#fff">W</text></svg><i class="w-1 h-1 mt-px rounded-full bg-[#14200e]"></i></div>
  <div class="w-[41.600px] flex flex-col items-center pt-1"><svg class="w-10 h-10" viewBox="0 0 40 40"><rect x="10" y="5" width="27" height="30" rx="1.500" fill="#ca4be8"/><path d="M30 5h5.500A1.500 1.500 0 0 1 37 6.500v6h-7z" fill="#e070f5"/><path d="M30 12.500h7V20h-7z" fill="#ae4bd5"/><path d="M30 20h7v7.500h-7z" fill="#9332bf"/><path d="M30 27.500h7v6a1.500 1.500 0 0 1-1.500 1.500H30z" fill="#7719aa"/><rect x="3" y="11" width="18" height="18" rx="1.500" fill="#7719aa"/><text x="11.500" y="25" text-anchor="middle" font-family="Open Sans" font-weight="700" font-size="13.500" fill="#fff">N</text></svg><i class="w-1 h-1 mt-px rounded-full bg-[#14200e]"></i></div>
  <div class="w-[41.600px] flex flex-col items-center pt-1"><svg class="w-10 h-10" viewBox="0 0 40 40"><circle cx="20" cy="20" r="17.300" fill="#e3e7ea"/><circle cx="20" cy="20" r="15.700" fill="#2492ee"/><circle cx="20" cy="20" r="14" fill="none" stroke="#b9defb" stroke-width="1.500" stroke-dasharray=".7 1.500"/><path d="M31 9 17.800 17.800l4.400 4.400z" fill="#f13a31"/><path d="M9.500 31l8.300-13.200 4.400 4.400z" fill="#f4f6f8"/></svg></div>
  <div class="w-[41.600px] flex flex-col items-center pt-1"><svg class="w-10 h-10" viewBox="0 0 40 40"><circle cx="20" cy="23" r="15" fill="#f8faf7"/><path d="M12.500 16h7v7h-7z" fill="#e8502a"/><path d="M20.500 16h7v7h-7z" fill="#7fba00"/><path d="M12.500 24h7v7h-7z" fill="#12a0e8"/><path d="M20.500 24h7v7h-7z" fill="#fbb910"/><path d="M16 1h8v6h4.500l-8.500 7-8.500-7H16z" fill="#57b75f"/></svg></div>
  <div class="w-[41.600px] flex flex-col items-center pt-1"><svg class="w-10 h-10" viewBox="0 0 40 40"><circle cx="20" cy="20" r="18" fill="#ffcd40"/><path d="M4.400 11A18 18 0 0 1 35.600 11H20a9 9 0 0 0-8 6z" fill="#dd4437"/><path d="M4.400 11l7.900 13.500A9 9 0 0 0 24 28l-5 10A18 18 0 0 1 4.400 11z" fill="#1da362"/><circle cx="20" cy="20" r="8.500" fill="#f1f1f1"/><circle cx="20" cy="20" r="7" fill="#4b86f0"/></svg><i class="w-1 h-1 mt-px rounded-full bg-[#14200e]"></i></div>
  <div class="w-[41.600px] flex flex-col items-center pt-1"><svg class="w-10 h-10" viewBox="0 0 40 40"><path d="M2.500 3h34v33h-34z" fill="#c80b0b"/><path d="M9 29c3-3 9-5 17-5.500 4 0 4 3 .5 2.500-5-1-10-7-10-13 0-3.500 2.500-3.500 2.500 0 0 5-4 13-7.500 16-1.500 1-3.500 1.500-2.500 0z" fill="none" stroke="#fff" stroke-width="1.300"/></svg><i class="w-1 h-1 mt-px rounded-full bg-[#14200e]"></i></div>
  <div class="w-[41.600px] flex flex-col items-center pt-1"><svg class="w-10 h-10" viewBox="0 0 40 40"><circle cx="20" cy="20" r="17.300" fill="#b6dff5"/><circle cx="20" cy="20" r="15.500" fill="#3a9bd8"/><circle cx="20" cy="20" r="12.500" fill="#17374c"/><path d="M25 10c-8-2-12 3-9 7s9 4 9 8-6 6-11 3" fill="none" stroke="#4fb0e6" stroke-width="4"/></svg></div>
  <div class="w-[18.400px] pt-[8px] flex justify-center"><i class="w-px h-[34px] bg-[#2f4d25]"></i></div>
  <div class="w-[41.600px] flex flex-col items-center pt-1"><svg class="w-10 h-10" viewBox="0 0 40 40"><path d="M3 4.500h34v30H3z" fill="#a6b5a8"/><path d="M4.500 6h31v27h-31z" fill="#1f2021"/><path d="M7 9.500l4 2-4 2M12 15.500h5" stroke="#f0f0f0" stroke-width="1.300" fill="none"/></svg><i class="w-1 h-1 mt-px rounded-full bg-[#0c1009]"></i></div>
  <div class="w-[41.600px] flex flex-col items-center pt-1"><svg class="w-10 h-10" viewBox="0 0 40 40"><rect x="3" y="3" width="34" height="34" rx="2" fill="#4b4b4b"/><path d="M10.500 13.500 30 7.500v6.700l-11 3.500 11 3.600v6.700L10.500 33.500v-6.700l11-3.500-11-3.500z" fill="#f79410"/></svg><i class="w-1 h-1 mt-px rounded-full bg-[#0c1009]"></i></div>
  <div class="w-[41.600px] flex flex-col items-center pt-1"><svg class="w-10 h-10" viewBox="0 0 40 40"><circle cx="20" cy="20" r="17.500" fill="#d04ad2"/><path d="M4 13a17.500 17.500 0 0 0 10 23.500z" fill="#3ba3f4"/><circle cx="20" cy="20" r="15.300" fill="#f8f8fb"/><path d="M16 27V12.500l11.500-2.300v14.500" fill="none" stroke="#e8447e" stroke-width="2.600"/><ellipse cx="14" cy="27.500" rx="3.500" ry="3" fill="#6a5be8"/><ellipse cx="25.500" cy="25.500" rx="3.500" ry="3" fill="#4b7cf0"/></svg><i class="w-1 h-1 mt-px rounded-full bg-[#0c1009]"></i></div>
  <div class="w-[18.400px] pt-[7px] flex justify-center"><i class="w-px h-[37px] bg-[#24282a]"></i></div>
  <div class="w-[41.600px] flex flex-col items-center pt-1"><svg class="w-10 h-10" viewBox="0 0 40 40"><path d="M7 5h20l6 6v9H7z" fill="#d5d6d6"/><path d="M8 7v14" stroke="#333" stroke-width="2" stroke-dasharray="1.500 1.500"/><path d="M9 3h14l8 9v26H9z" fill="#f7f7f7"/><path d="M23 3l8 9h-8z" fill="#cfcfcf"/><path d="M12 10h8M12 14h12M12 17h14M12 20h10M12 23h13" stroke="#aaa" stroke-width=".9"/><text x="20" y="36" text-anchor="middle" font-family="Liberation Sans" font-size="6" fill="#777">PDF</text></svg></div>
  <div class="w-[41.600px] flex flex-col items-center pt-1"><svg class="w-10 h-10" viewBox="0 0 40 40"><path d="M11 1l12 2 4 6v6H11z" fill="#f2f2f2"/><path d="M3 8a2 2 0 0 1 2-2h8l3 3h19a2 2 0 0 1 2 2v22a2 2 0 0 1-2 2H5a2 2 0 0 1-2-2z" fill="#56b4e2"/><path d="M3 12h34v21a2 2 0 0 1-2 2H5a2 2 0 0 1-2-2z" fill="#6fcaf2"/></svg></div>
  <div class="w-[41.600px] flex flex-col items-center pt-1"><svg class="w-10 h-10" viewBox="0 0 40 40"><path d="M1 3h38v34H1z" fill="#f6f7f9"/><path d="M1 3h38v1.800H1z" fill="#3f73b5"/><path d="M1 5h38v4H1z" fill="#dde0e6"/><path d="M4 12h20M4 15h28M4 18h14M4 22h30M4 25h26M4 28h18" stroke="#a9abb0" stroke-width=".9"/><path d="M27 26h11v11H27z" fill="#2c9be8"/><path d="M25 28h8v7h-8z" fill="#0f6cbd"/><circle cx="29" cy="31.500" r="1.900" fill="none" stroke="#fff"/></svg></div>
  <div class="w-[41.600px] flex flex-col items-center pt-1"><svg class="w-10 h-10" viewBox="0 0 40 40"><path d="M1 9h38v21H1z" fill="#f6f7f9"/><path d="M1 9h38v1.500H1z" fill="#5484c4"/><path d="M1 11h38v3H1z" fill="#dde0e6"/><circle cx="19" cy="15" r="1.200" fill="#e33"/><path d="M18 20h20v3H18z" fill="#9fc2ea"/><path d="M4 17h8M4 20h9M4 24h6M20 26h14" stroke="#a9abb0" stroke-width=".9"/><path d="M27 26h11v11H27z" fill="#2c9be8"/><path d="M25 28h8v7h-8z" fill="#0f6cbd"/><circle cx="29" cy="31.500" r="1.900" fill="none" stroke="#fff"/></svg></div>
  <div class="w-[41.600px] flex flex-col items-center pt-1"><svg class="w-10 h-10" viewBox="0 0 40 40"><path d="M7 6l4-4 6 1 5-2 6 3 5 3-2 5H9z" fill="#e4e6e8"/><path d="M10 5l3 2M18 3l3 3M25 5l4 1" stroke="#333" stroke-width="2"/><path d="M14 3l2 3" stroke="#3b7ed0" stroke-width="1.500"/><path d="M6 7h28l-4 28c0 3-20 3-20 0z" fill="#dadcda" fill-opacity=".93"/><path d="M12 12l2 22M20 13v22M28 12l-2 22M16 18l8 6-6 8" stroke="#c9ccca" fill="none" stroke-width=".8"/><ellipse cx="20" cy="8" rx="14" ry="2.300" fill="none" stroke="#f4f5f4"/></svg></div>
</footer>
</div>
</body>
</html>
